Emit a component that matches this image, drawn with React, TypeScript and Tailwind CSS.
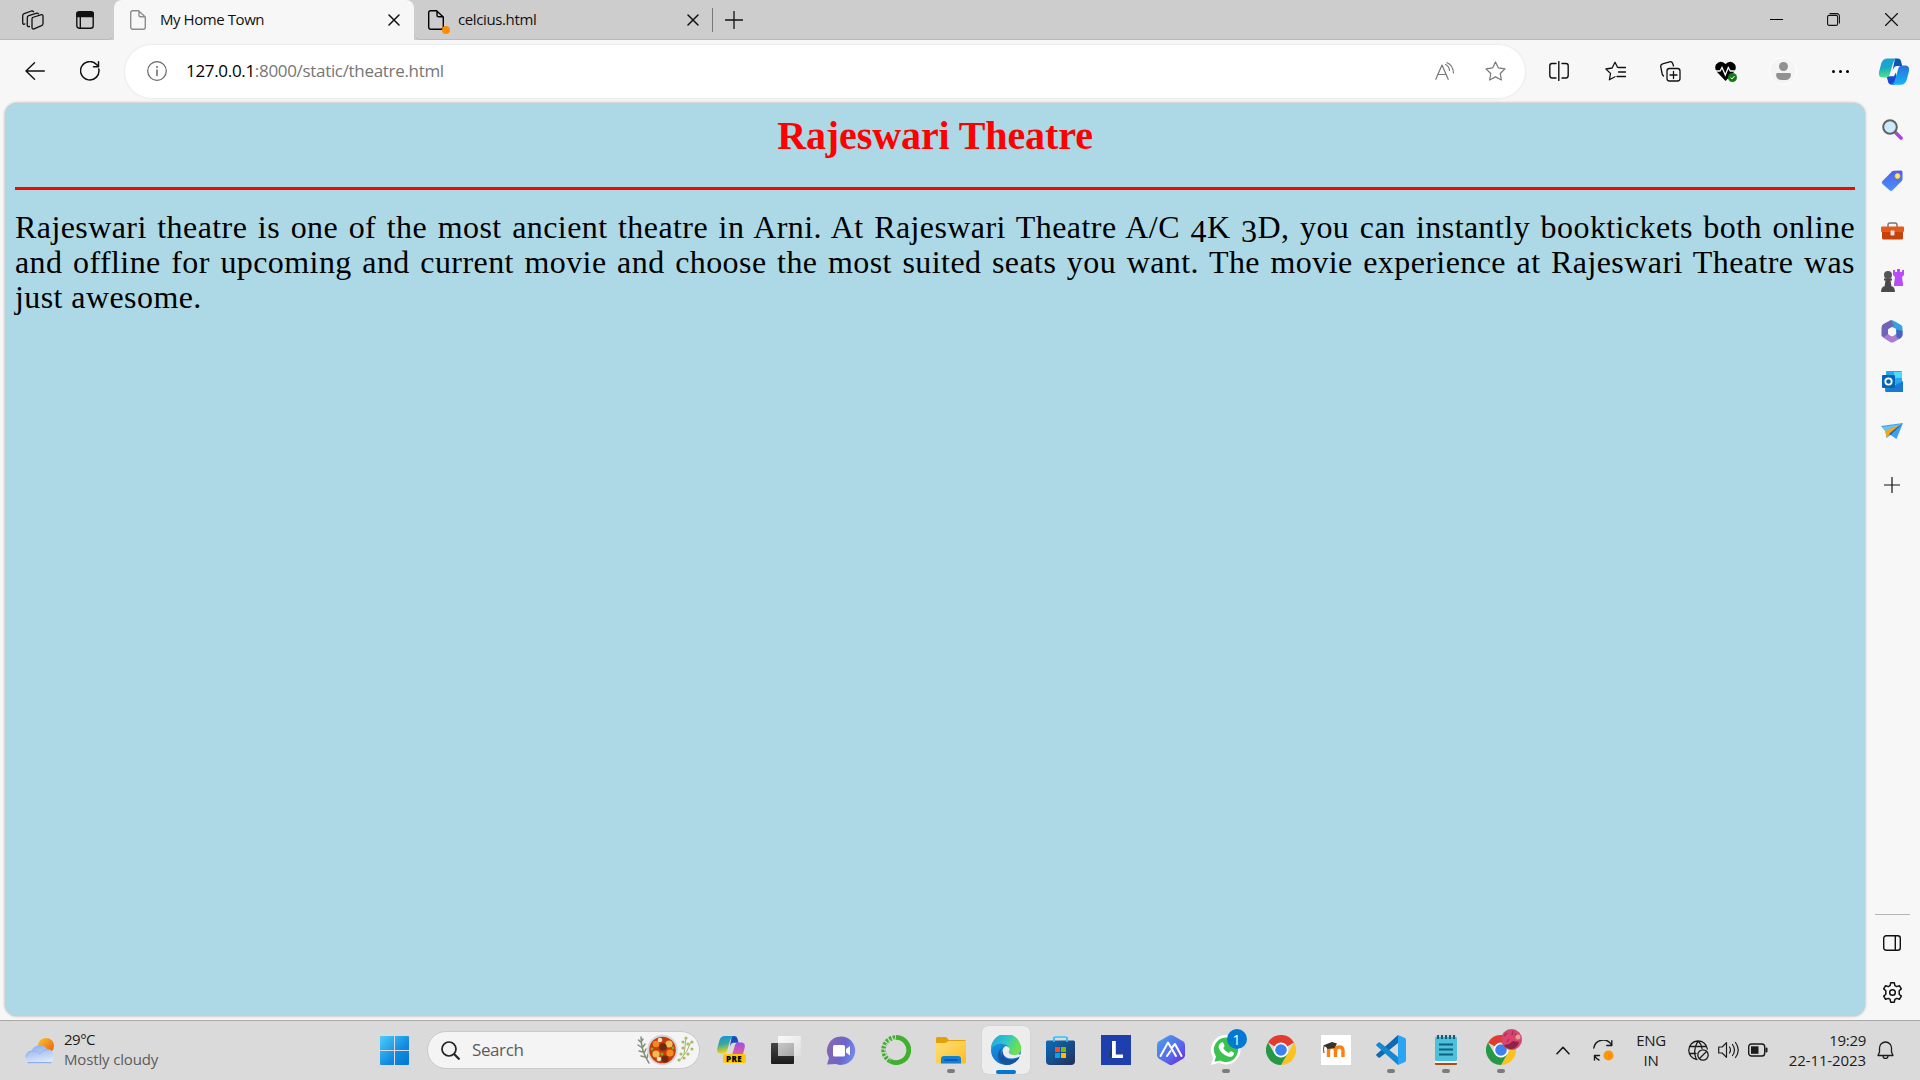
import React, { ReactNode } from "react";

const line = { fill: "none", stroke: "currentColor", strokeLinecap: "round" as const, strokeLinejoin: "round" as const };

function Cell({ className, children }: { className: string; children?: ReactNode }) {
  return <div className={`flex shrink-0 items-center justify-center ${className}`}>{children}</div>;
}

function DocIcon({ className }: { className: string }) {
  return (
    <svg width="16" height="20" viewBox="0 0 16 20" className={className} {...line} strokeWidth="1.4">
      <path d="M2.5.7h6L15.3 7v10.3a2 2 0 0 1-2 2H2.7a2 2 0 0 1-2-2V2.5A1.8 1.8 0 0 1 2.5.7zM9 1v4.2A1.6 1.6 0 0 0 10.600 6.800H15" />
    </svg>
  );
}

function CloseIcon() {
  return (
    <svg width="12" height="12" viewBox="0 0 12 12" {...line} strokeWidth="1.5">
      <path d="M1 1l10 10M11 1L1 11" />
    </svg>
  );
}

function TabStrip() {
  return (
    <div className="flex h-10 bg-[#cdcdcd] text-[15px] text-[#111]">
      <div className="flex w-[114px] items-center rounded-br-md border-b border-[#b9b9b9] pl-[6px]">
        <Cell className="w-[53px]">
          <svg width="22" height="20" viewBox="0 0 22 20" {...line} strokeWidth="1.3">
            <path d="M10.500 7.500l9-2.800q1.500-.2 1.500 1.300v7.500q0 1.500-1.500 2.200l-7.500 3.200q-2 .5-2-1.300V9.300q0-1.300 .5-1.800z" />
            <path d="M7.500 16.500q-2.200.5-2.200-1.300V7.500q0-1.300 1.500-1.900l8-2.500q1.200-.3 1.700.8" />
            <path d="M3 14q-2.300.8-2.300-1.200V5.800q0-1.500 1.500-2.100L9.500 1q1.500-.3 2 .8" />
          </svg>
        </Cell>
        <Cell className="w-[52px]">
          <svg width="18" height="18" viewBox="0 0 18 18" {...line} strokeWidth="1.400">
            <rect x=".8" y=".8" width="16.400" height="16.400" rx="2.500" />
            <path d="M1 1.500h16v4H1z" fill="currentColor" />
            <path d="M4.300 5v12" />
          </svg>
        </Cell>
      </div>
      <div className="flex w-[300px] items-center rounded-t-lg bg-[#f7f7f7] pr-[14px] pl-4">
        <DocIcon className="text-[#8c8c8c]" />
        <span className="ml-[14px] grow pb-[2px] font-['Open_Sans'] tracking-[-0.43px]">My Home Town</span>
        <CloseIcon />
      </div>
      <div className="flex w-[298px] items-center rounded-bl-md border-b border-[#b9b9b9] pr-[13px] pl-[14px]">
        <div className="relative">
          <DocIcon className="text-black" />
          <span className="absolute top-4 left-[14px] h-2 w-2 rounded-full bg-[#ff8c00]" />
        </div>
        <span className="ml-[14px] grow font-['Open_Sans'] tracking-[-0.38px]">celcius.html</span>
        <CloseIcon />
      </div>
      <div className="flex grow items-center border-b border-[#b9b9b9]">
        <div className="h-6 w-px bg-[#777]" />
        <Cell className="w-[42px]">
          <svg width="18" height="18" viewBox="0 0 18 18" {...line} strokeWidth="1.300">
            <path d="M9 .5v17M.5 9h17" />
          </svg>
        </Cell>
        <div className="grow" />
        <Cell className="w-[57px]">
          <div className="h-px w-[13px] bg-black" />
        </Cell>
        <Cell className="w-[57px]">
          <svg width="13" height="13" viewBox="0 0 13 13" {...line} strokeWidth="1.100">
            <rect x=".6" y="2.400" width="10" height="10" rx="1.500" />
            <path d="M3 .6h7a2.400 2.400 0 0 1 2.400 2.400v7" />
          </svg>
        </Cell>
        <Cell className="w-[58px]">
          <svg width="13" height="13" viewBox="0 0 13 13" {...line} strokeWidth="1.200">
            <path d="M.5.5l12 12M12.500.5l-12 12" />
          </svg>
        </Cell>
      </div>
    </div>
  );
}

function CopilotIcon() {
  return (
    <svg width="30" height="27" viewBox="0 0 32 28">
      <defs>
        <linearGradient id="cpA" x1="0" y1="0" x2="0.100" y2="1">
          <stop offset="0" stopColor="#1a9fe0" />
          <stop offset=".5" stopColor="#17a9c4" />
          <stop offset="1" stopColor="#4fe08a" />
        </linearGradient>
        <linearGradient id="cpB" x1="0" y1="0" x2="0" y2="1">
          <stop offset="0" stopColor="#2a6fdc" />
          <stop offset="1" stopColor="#14b4fa" />
        </linearGradient>
      </defs>
      <path d="M17 0h3q3 0 3.500 3l1.300 5H19q-3 0-4.500 5z" fill="#0b57b0" />
      <path d="M8 19h8l2-4 1 10-2 3h-3q-4 0-4.500-4z" fill="#1a49d4" />
      <path d="M9 0h10q-3 1-4 5l-3.500 12q-1 3.500-4 3.500H4q-5 0-4-6L2.500 5Q4 0 9 0z" fill="url(#cpA)" />
      <path d="M23 28H12.500q3.500-1 4.500-5l3.500-12Q21.500 7.500 25 7.500h3q5 0 4 6L29.500 23Q28 28 23 28z" fill="url(#cpB)" />
    </svg>
  );
}

function Toolbar() {
  return (
    <div className="flex h-[63px] items-center bg-[#f7f7f7] pl-[7px] text-[#111]">
      <Cell className="w-14 pb-[2px]">
        <svg width="20" height="18" viewBox="0 0 20 18" {...line} strokeWidth="1.400">
          <path d="M19.300 9H1M9.500.8L1 9l8.500 8.200" />
        </svg>
      </Cell>
      <Cell className="w-[54px] pb-px">
        <svg width="20" height="20" viewBox="0 0 20 20" {...line} strokeWidth="1.500">
          <path d="M18.800 8A9.200 9.200 0 1 1 16.500 3.500L18.500 5.500M18.500.8v5h-5" />
        </svg>
      </Cell>
      <div className="ml-2 flex h-[53px] w-[1400px] items-center rounded-full bg-white pr-[5px] pb-px pl-3 shadow-[0_0_3px_rgba(0,0,0,0.1)]">
        <Cell className="w-10">
          <svg width="20" height="20" viewBox="0 0 20 20" {...line} strokeWidth="1.200" className="text-[#666]">
            <circle cx="10" cy="10" r="9.300" />
            <path d="M10 9v5.500" strokeWidth="1.500" />
            <circle cx="10" cy="6" r=".4" fill="currentColor" />
          </svg>
        </Cell>
        <span className="ml-[9px] grow font-['Open_Sans'] text-[17px] tracking-[-0.32px] text-[#767676]">
          <span className="text-black">127.0.0.1</span>:8000/static/theatre.html
        </span>
        <Cell className="w-[50px] text-[#777]">
          <svg width="20" height="18" viewBox="0 0 20 18" {...line} strokeWidth="1.200">
            <path d="M.8 17.300L7 3l6.200 14.300M3 12.500h8M10.500 2.500q3.500 1.500 4 6M12 .7q6 2.300 6.500 10.300" />
          </svg>
        </Cell>
        <Cell className="w-[50px] text-[#777]">
          <svg width="21" height="20" viewBox="0 0 21 20" {...line} strokeWidth="1.200">
            <path d="M10.500 1l2.900 5.900 6.600 1-4.800 4.600 1.200 6.500-5.900-3.100L4.600 19l1.200-6.500L1 7.900l6.600-1z" />
          </svg>
        </Cell>
      </div>
      <div className="ml-[6px] flex grow pb-px">
        <Cell className="w-14">
          <svg width="20" height="20" viewBox="0 0 20 20" {...line} strokeWidth="1.400">
            <path d="M7 2.500H3q-2.200 0-2.200 2.200v9.600Q.8 17 3 17h4M13 2.500h4q2.200 0 2.200 2.200v9.600Q19.200 17 17 17h-4M9.800.5v19" />
          </svg>
        </Cell>
        <Cell className="w-14">
          <svg width="21" height="20" viewBox="0 0 21 20" {...line} strokeWidth="1.300">
            <path d="M20.500 6.500H14l-1.500-.2-2.500-5-2.900 5.700-6.200 1 4.600 4.400-1.100 6.400 5.600-3M13.500 11h7M12 15.500h8.500" />
          </svg>
        </Cell>
        <Cell className="w-[55px]">
          <svg width="21" height="21" viewBox="0 0 21 21" {...line} strokeWidth="1.300">
            <rect x="7" y="7.500" width="13" height="12.500" rx="2.500" />
            <path d="M13.500 10.500v7M10 14h7M3.500 15Q2.500 14 2.200 13L.8 6Q.3 3.500 2.600 2.800l7-2q2.400-.5 3.200 1.900l.7 2.300" />
          </svg>
        </Cell>
        <Cell className="w-[56px]">
          <svg width="22" height="21" viewBox="0 0 22 21">
            <path d="M10.500 20L2 11Q-1 7 1 3.500 5-1.500 10.500 3q5.500-4.500 9.500.5 2 3.500-1 7.500z" fill="#000" />
            <path d="M0 10h5l2-3.500 3.300 7.500 3-7.500 2 3.500h6" fill="none" stroke="#f7f7f7" strokeWidth="1.300" />
            <circle cx="17.500" cy="16.500" r="4.500" fill="#107c10" />
            <path d="M15.500 16.500l1.500 1.500 2.500-3" fill="none" stroke="#fff" strokeWidth="1" />
          </svg>
        </Cell>
        <Cell className="w-[58px]">
          <div className="flex h-7 w-7 flex-col items-center justify-center gap-[2px] rounded-full border border-white bg-[#f4f4f4]">
            <div className="h-[9px] w-[9px] rounded-full bg-[#919191]" />
            <div className="h-[7px] w-[15px] rounded-t-[2px] rounded-b-[7px] bg-[#919191]" />
          </div>
        </Cell>
        <Cell className="w-14 gap-1">
          <div className="h-[3px] w-[3px] rounded-full bg-black" />
          <div className="h-[3px] w-[3px] rounded-full bg-black" />
          <div className="h-[3px] w-[3px] rounded-full bg-black" />
        </Cell>
        <Cell className="w-[51px]">
          <CopilotIcon />
        </Cell>
      </div>
    </div>
  );
}

function Page() {
  return (
    <main className="ml-[5px] h-[913px] w-[1860px] shrink-0 rounded-xl bg-[#add8e6] px-[10px] shadow-[0_0_3px_rgba(0,0,0,0.35)]">
      <h1 className="pt-[9px] text-center font-['Liberation_Serif'] text-[40px] leading-[48px] font-bold tracking-[-0.1px] text-[#ff0000]">
        Rajeswari Theatre
      </h1>
      <hr className="mt-[27px] h-[3px] border-0 bg-[#ff0000]" />
      <div className="mt-[20px] font-['Liberation_Serif'] text-[32px] leading-[35px] tracking-[0.42px] whitespace-nowrap text-black">
        <p className="[text-align-last:justify]">
          Rajeswari theatre is one of the most ancient theatre in Arni. At Rajeswari Theatre A/C{" "}
          <span className="relative top-[4px]">4</span>K <span className="relative top-[4px]">3</span>D, you can instantly booktickets both online
        </p>
        <p className="[text-align-last:justify]">
          and offline for upcoming and current movie and choose the most suited seats you want. The movie experience at Rajeswari Theatre was
        </p>
        <p>just awesome.</p>
      </div>
    </main>
  );
}

function Sidebar() {
  return (
    <aside className="flex grow flex-col items-center pt-px pr-px text-[#111]">
      <Cell className="h-[51px]">
        <svg width="21" height="21" viewBox="0 0 21 21">
          <path d="M14 14l5 5" stroke="#b43cf0" strokeWidth="3.600" strokeLinecap="round" />
          <path d="M12 12l3 3" stroke="#777" strokeWidth="2" />
          <circle cx="8" cy="8" r="6.800" fill="#cdeafd" stroke="#606266" strokeWidth="2" />
        </svg>
      </Cell>
      <Cell className="h-[51px]">
        <svg width="22" height="22" viewBox="0 0 22 22">
          <defs>
            <linearGradient id="tag" x1="0" y1="0" x2="0" y2="1">
              <stop offset="0" stopColor="#4f5fe0" />
              <stop offset="1" stopColor="#4a90ff" />
            </linearGradient>
          </defs>
          <path d="M11 1.500q.8-.7 2-.8l7-.2q1.500 0 1.500 1.500v7q0 1.300-1 2.300l-9 9q-1.500 1.300-3 0L1.500 14q-1.500-1.500 0-3z" fill="url(#tag)" />
          <circle cx="16.500" cy="6" r="2.500" fill="#ffe680" stroke="#f6c515" />
        </svg>
      </Cell>
      <Cell className="h-[50px]">
        <svg width="23" height="18" viewBox="0 0 23 18">
          <path d="M7 5V3q0-2 2-2h5q2 0 2 2v2" fill="none" stroke="#777" strokeWidth="1.500" />
          <rect x="1" y="5" width="21" height="12.500" rx="1.500" fill="#c8410b" />
          <rect x="0" y="4.500" width="23" height="5.500" rx="1" fill="#e25a1c" />
          <rect x="9.500" y="8.500" width="4" height="5" rx="1" fill="#e3e3e3" />
        </svg>
      </Cell>
      <Cell className="h-[50px]">
        <svg width="24" height="24" viewBox="0 0 24 24">
          <path d="M13 1h2v2h2V0h3v3h2V1h2v5l-2 2 1 7v2h-9V15l1-7-2-2z" fill="#b84df5" />
          <circle cx="8" cy="6" r="4" fill="#555" />
          <path d="M4 9.500h8v2h-1.500l1 6h1.500q2 2 2 5.500H1q0-3.500 2-5.500h1.500l1-6H4z" fill="#4a4a4a" />
        </svg>
      </Cell>
      <Cell className="h-[50px]">
        <svg width="22" height="23" viewBox="0 0 22 23">
          <path d="M10 0q2 0 4 1.500l6 3.500q1.500 1 1.500 3v4L13 8 8 7z" fill="#35a4dc" />
          <path d="M10 0L2.500 4Q.5 5 .5 8v8l3 2 4-3V9.500l5.500-4z" fill="#7064b5" />
          <path d="M21.500 11v4q0 2-2 3.200L13 22q-2 1-4 0l-7-4.500 5-3 4.500 2 4-3z" fill="#a97bd3" />
          <path d="M15 9l6.500 2v4q-.5 2.500-3 4l-3-2z" fill="#3f68c5" />
          <path d="M11 7l4 2.300v4.500L11 16l-4-2.200V9.300z" fill="#f7f7f7" />
        </svg>
      </Cell>
      <Cell className="h-[50px]">
        <svg width="21" height="21" viewBox="0 0 21 21">
          <rect x="4" y="0" width="16" height="13" rx="1" fill="#28a8ea" />
          <path d="M12 1h8v6h-8z" fill="#50d9ff" />
          <path d="M3 10l9 4 9-4v10H3z" fill="#1490df" />
          <path d="M3 20l18-9v10H4z" fill="#1b78cf" />
          <rect x="0" y="4" width="13" height="13" rx="1" fill="#0364b8" />
          <circle cx="6.500" cy="10.500" r="3.200" fill="none" stroke="#fff" strokeWidth="1.800" />
        </svg>
      </Cell>
      <Cell className="h-[50px]">
        <svg width="22" height="17" viewBox="0 0 22 17">
          <path d="M0 3l22-3-6.500 16-6-4-4 3-1-7z" fill="#3ba1ee" />
          <path d="M4 8L21 1 9.500 12z" fill="#1565c0" />
          <path d="M1 4L21 1 5 9.500z" fill="#64c4f8" />
          <path d="M4 8L20 1 9 10l-3 5z" fill="#f5a612" />
        </svg>
      </Cell>
      <Cell className="h-[58px]">
        <svg width="16" height="16" viewBox="0 0 16 16" {...line} strokeWidth="1.200">
          <path d="M8 .5v15M.5 8h15" />
        </svg>
      </Cell>
      <div className="grow" />
      <div className="h-px w-[35px] bg-[#b5b5b5]" />
      <Cell className="h-[55px]">
        <svg width="18" height="16" viewBox="0 0 18 16" {...line} strokeWidth="1.400">
          <rect x=".7" y=".7" width="16.600" height="14.600" rx="2.500" />
          <path d="M12.300 1v14" />
        </svg>
      </Cell>
      <Cell className="mb-[5px] h-[45px]">
        <svg width="21" height="21" viewBox="0 0 21 21" {...line} strokeWidth="1.500">
          <circle cx="10.500" cy="10.500" r="2.800" />
          <path d="M8.700.8h3.600l.6 2.800 1.800 1 2.700-.9 1.900 3.200-2.100 1.900v3.400l2.100 1.900-1.900 3.200-2.700-.9-1.800 1-.6 2.800H8.700l-.6-2.800-1.800-1-2.700.9-1.900-3.200 2.100-1.900V8.800L1.700 6.900l1.900-3.200 2.700.9 1.800-1z" />
        </svg>
      </Cell>
    </aside>
  );
}

function ChromeIcon() {
  return (
    <svg width="30" height="30" viewBox="0 0 30 30">
      <path d="M15 15L2 7.500A15 15 0 0 1 28 7.500z" fill="#e33b2e" />
      <path d="M15 7.500h13L21.500 19 15 30A15 15 0 0 0 28 7.500z" fill="#fcc31e" />
      <path d="M2 7.500A15 15 0 0 0 15 30l6.500-11.300L15 22.500l-6.500-3.700z" fill="#279847" />
      <circle cx="15" cy="15" r="7.400" fill="#fff" />
      <circle cx="15" cy="15" r="5.800" fill="#3b82f0" />
    </svg>
  );
}

function Slot({ children, running }: { children: ReactNode; running?: boolean }) {
  return (
    <div className="relative flex h-full w-[55px] shrink-0 items-center justify-center">
      {children}
      {running && <span className="absolute bottom-[6px] left-[24px] h-1 w-2 rounded-full bg-[#7c7c7c]" />}
    </div>
  );
}

function TaskIcons() {
  return (
    <div className="flex h-full">
      <Slot>
        <div className="relative h-7 w-7">
          <svg width="28" height="24" viewBox="0 0 32 28">
            <defs>
              <linearGradient id="preA" x1="0" y1="0" x2="0.200" y2="1">
                <stop offset="0" stopColor="#178fe0" />
                <stop offset=".5" stopColor="#36a89f" />
                <stop offset="1" stopColor="#f2d01c" />
              </linearGradient>
              <linearGradient id="preB" x1="0" y1="0" x2="0" y2="1">
                <stop offset="0" stopColor="#a04bea" />
                <stop offset="1" stopColor="#ff6d6d" />
              </linearGradient>
            </defs>
            <path d="M17 0h3q3 0 3.500 3l1.300 5H19q-3 0-4.500 5z" fill="#164dbb" />
            <path d="M9 0h10q-3 1-4 5l-3.500 12q-1 3.500-4 3.500H4q-5 0-4-6L2.500 5Q4 0 9 0z" fill="url(#preA)" />
            <path d="M23 28H12.500q3.500-1 4.500-5l3.500-12Q21.500 7.500 25 7.500h3q5 0 4 6L29.500 23Q28 28 23 28z" fill="url(#preB)" />
          </svg>
          <span className="absolute top-[18px] left-[6px] h-[9px] w-[23px] rounded-[2px] bg-[#fdc70c] text-center font-['Open_Sans'] text-[8px] leading-[9px] font-extrabold tracking-[0.4px] text-black">
            PRE
          </span>
        </div>
      </Slot>
      <Slot>
        <svg width="30" height="28" viewBox="0 0 30 28">
          <defs>
            <linearGradient id="tv" x1="0" y1="0" x2="0" y2="1">
              <stop offset="0" stopColor="#454743" />
              <stop offset="1" stopColor="#1c1c1c" />
            </linearGradient>
            <linearGradient id="tw" x1="0" y1="0" x2="1" y2="1">
              <stop offset="0" stopColor="#fafafa" />
              <stop offset="1" stopColor="#dedede" />
            </linearGradient>
            <linearGradient id="tx" x1="0" y1="0" x2="1" y2="1">
              <stop offset="0" stopColor="#c8c8c8" />
              <stop offset="1" stopColor="#a6a6a6" />
            </linearGradient>
          </defs>
          <rect x="0" y="7" width="23" height="21" rx="1" fill="url(#tv)" />
          <rect x="7" y="0" width="23" height="20" rx="1" fill="url(#tw)" />
          <rect x="7" y="7" width="16" height="13" fill="url(#tx)" />
        </svg>
      </Slot>
      <Slot>
        <svg width="30" height="29" viewBox="0 0 30 29">
          <defs>
            <linearGradient id="chat" x1="0" y1="0.200" x2="1" y2="0.500">
              <stop offset="0" stopColor="#8a66ae" />
              <stop offset=".6" stopColor="#6a66cc" />
              <stop offset="1" stopColor="#7488ea" />
            </linearGradient>
          </defs>
          <path d="M15 .5A14.200 14.200 0 1 1 10 28L1 28.500 3 22A14.200 14.200 0 0 1 15 .5z" fill="url(#chat)" />
          <rect x="7" y="9" width="12" height="11.500" rx="1.500" fill="#fff" />
          <path d="M20 13l4-3v9.500l-4-3z" fill="#fff" />
        </svg>
      </Slot>
      <Slot>
        <svg width="30" height="30" viewBox="0 0 30 30">
          <path d="M15 2.400A12.600 12.600 0 1 1 9 26" fill="none" stroke="#41b02e" strokeWidth="4.800" />
          <path d="M9 26A12.600 12.600 0 0 1 15 2.400" fill="none" stroke="#41b02e" strokeWidth="4.600" strokeDasharray="2.500 1.200" />
          <path d="M9.500 24.500A11 11 0 0 1 14 4" fill="none" stroke="#dadada" strokeWidth="1" strokeDasharray="3 2" />
        </svg>
      </Slot>
      <Slot running>
        <svg width="30" height="27" viewBox="0 0 30 27">
          <defs>
            <linearGradient id="fold" x1="0" y1="0" x2="1" y2="1">
              <stop offset="0" stopColor="#ffe07a" />
              <stop offset="1" stopColor="#fbbd20" />
            </linearGradient>
          </defs>
          <path d="M0 1.500Q0 0 1.500 0H10l3 3h15.500Q30 3 30 5v6H0z" fill="#e3a008" />
          <path d="M0 6h9.500l3-2H30v21q0 1.500-1.500 1.500h-27Q0 26.500 0 25z" fill="url(#fold)" />
          <path d="M5 26.500V22q0-3 3-3h14q3 0 3 3v4.500z" fill="#1481d5" />
          <path d="M9 23h12" stroke="#0b519c" strokeWidth="1.600" strokeLinecap="round" />
        </svg>
      </Slot>
      <Slot>
        <div className="relative flex h-12 w-12 items-center justify-center rounded-md bg-[#ededed] shadow-[0_0_1px_rgba(0,0,0,0.2)]">
          <svg width="30" height="30" viewBox="0 0 30 30">
            <defs>
              <linearGradient id="edA" x1="0" y1="0" x2="1" y2="0.400">
                <stop offset="0" stopColor="#269fd9" />
                <stop offset=".5" stopColor="#2cc3d2" />
                <stop offset="1" stopColor="#6ee24b" />
              </linearGradient>
              <linearGradient id="edB" x1="0" y1="0" x2="0.300" y2="1">
                <stop offset="0" stopColor="#1aa0e0" />
                <stop offset="1" stopColor="#0f6fd0" />
              </linearGradient>
            </defs>
            <circle cx="15" cy="15" r="15" fill="url(#edB)" />
            <path d="M0 13.500A15 15 0 0 1 30 14q0 6-7 6-6 0-5-3 1-6-4-7.500Q6 7 0 13.500z" fill="url(#edA)" />
            <path d="M11 13q-3 5 0 10 4 6 11 3.500 3-.8 5.700-3A15 15 0 0 1 15 30Q7 28 7 20q0-4 4-7z" fill="#15569f" />
            <path d="M14.500 11q-4.500 3-2.500 7.500 2.500 5.500 9.500 5 5-.6 7-2 2.500-1-1-2.500-4 1.500-7.500.5-3.500-1.300-1.500-4 .5-4-4-4.500z" fill="#ededed" />
            <path d="M12 15q-1.500 9 7 9.800 5 .2 9.500-2.800l-1 2Q21 30 14 27q-6-4-2-12z" fill="#17529a" />
          </svg>
          <span className="absolute bottom-0 left-[14px] h-1 w-5 rounded-full bg-[#0078d4]" />
        </div>
      </Slot>
      <Slot>
        <svg width="29" height="29" viewBox="0 0 29 29">
          <defs>
            <linearGradient id="store" x1="0" y1="0" x2="1" y2="1">
              <stop offset="0" stopColor="#0a6cbd" />
              <stop offset="1" stopColor="#233058" />
            </linearGradient>
          </defs>
          <path d="M8 6V2.500Q8 1 9.500 1h10Q21 1 21 2.500V6" fill="none" stroke="#37c1f5" strokeWidth="1.600" />
          <path d="M0 6Q0 4.500 1.500 4.500h26Q29 4.500 29 6v19q0 4-4 4H4q-4 0-4-4z" fill="url(#store)" />
          <path d="M8 1v5M21 1v5" stroke="#37c1f5" strokeWidth="1.600" />
          <rect x="9" y="11" width="5" height="5" fill="#f25022" />
          <rect x="15" y="11" width="5" height="5" fill="#7fba00" />
          <rect x="9" y="17" width="5" height="5" fill="#00a4ef" />
          <rect x="15" y="17" width="5" height="5" fill="#ffb900" />
        </svg>
      </Slot>
      <Slot>
        <svg width="30" height="30" viewBox="0 0 30 30">
          <rect width="30" height="30" fill="#1f3fae" />
          <path d="M11 7l-3 16 3-2z" fill="#12405e" />
          <path d="M11 6h3.800v13.500H22V23H11z" fill="#fff" />
        </svg>
      </Slot>
      <Slot>
        <svg width="28" height="30" viewBox="0 0 28 30">
          <defs>
            <linearGradient id="arc" x1="0" y1="0" x2="1" y2="1">
              <stop offset="0" stopColor="#45a5ee" />
              <stop offset=".6" stopColor="#5a66ea" />
              <stop offset="1" stopColor="#6b1fe0" />
            </linearGradient>
          </defs>
          <path d="M12 .6q2-1 4 0l10 5.600q2 1.200 2 3.500v10.600q0 2.300-2 3.500l-10 5.600q-2 1-4 0L2 23.800q-2-1.200-2-3.500V9.700q0-2.300 2-3.500z" fill="url(#arc)" />
          <path d="M3.500 21L11 7.500l8 13.500M10 21l3.500-5M15.500 12L18 9l6.500 12" fill="none" stroke="#fff" strokeWidth="2" strokeLinecap="round" strokeLinejoin="round" />
        </svg>
      </Slot>
      <Slot running>
        <div className="relative h-[30px] w-[30px]">
          <svg width="30" height="30" viewBox="0 0 30 30">
            <path d="M15 0a14.700 14.700 0 1 1-7 27.700L0 30l2.300-7.500A14.700 14.700 0 0 1 15 0z" fill="#fff" />
            <path d="M15 2.500a12.200 12.200 0 1 1-6 22.900L3.500 26.700 5 21.500A12.200 12.200 0 0 1 15 2.500z" fill="#3ac24f" />
            <path d="M10.500 7.500q1.500-.5 2 .8l1 2.400q.2.800-1.300 2.300 2 3.700 5.500 5 1.700-2.200 2.500-1.800l2.800 1.500q.5 1.800-1.500 3.500-2 1.200-5 0-6-2.200-8.500-7.500-1.500-3.700 2.500-6.200z" fill="#fff" />
          </svg>
          <span className="absolute -top-[6px] left-[16px] flex h-5 w-5 items-center justify-center rounded-full bg-[#0078d4] font-['Open_Sans'] text-[14px] text-white">
            1
          </span>
        </div>
      </Slot>
      <Slot>
        <ChromeIcon />
      </Slot>
      <Slot>
        <div className="flex h-[30px] w-[30px] items-end justify-center bg-white">
          <svg width="30" height="30" viewBox="0 0 30 30">
            <path d="M7.500 22v-6.500q0-3.500 3.500-3.500t3.500 3.500V22M14.500 15.500q0-3.500 3.700-3.500t3.800 3.500V22" fill="none" stroke="#f98012" strokeWidth="3.400" />
            <path d="M2 10.500l9-3.500 5 1.500-2.500 4.500-7 1-1.500-2z" fill="#333" />
            <path d="M3 11q-1 3 0 7" fill="none" stroke="#444" strokeWidth="1" />
          </svg>
        </div>
      </Slot>
      <Slot running>
        <svg width="30" height="30" viewBox="0 0 30 30">
          <path d="M22 0l7 3q1 .6 1 2v20q0 1.400-1 2l-7 3z" fill="#2aa5f4" />
          <path d="M22 0v8L4 22.500q-.8.500-1.500 0l-2-1.800q-.8-.8 0-1.500z" fill="#0f6ab2" />
          <path d="M22 30v-8L4 7.500q-.8-.5-1.500 0l-2 1.800q-.8.800 0 1.500z" fill="#1688cf" />
        </svg>
      </Slot>
      <Slot running>
        <svg width="22" height="30" viewBox="0 0 22 30">
          <rect x="0" y="24" width="22" height="6" rx="1" fill="#ad4b12" />
          <rect x="0" y="24" width="22" height="4" fill="#f2f2f2" />
          <rect x="0" y="2" width="22" height="24" rx="1" fill="#4fc0dc" />
          <path d="M3 0v4M7 0v4M11 0v4M15 0v4M19 0v4" stroke="#0f5f7d" strokeWidth="2.200" />
          <path d="M4 9.500h14M4 14.500h14M4 19.500h14" stroke="#10617e" strokeWidth="1.800" />
        </svg>
      </Slot>
      <Slot running>
        <div className="relative">
          <ChromeIcon />
          <svg width="21" height="21" viewBox="0 0 21 21" className="absolute -top-[6px] left-[15px]">
            <circle cx="10.500" cy="10.500" r="10.200" fill="#dd4370" stroke="#a35368" strokeWidth=".6" />
            <path d="M3 7l3-3M12 2l-1 4M8 10l-2 3M14 5l2 2" stroke="#9b315b" strokeWidth="1.300" />
            <path d="M3 16l5-1 4-3 6 1q-2 6.500-7.500 7Q5 20 3 16z" fill="#8d2346" />
            <circle cx="17" cy="8" r="2.500" fill="#e7a08b" />
          </svg>
        </div>
      </Slot>
    </div>
  );
}

function Taskbar() {
  return (
    <footer className="flex h-[60px] items-center border-t border-[#a9a9a7] bg-[#dadada] font-['Open_Sans'] text-[#1b1b1b]">
      <div className="flex w-[380px] items-center pl-[25px]">
        <svg width="30" height="26" viewBox="0 0 30 26">
          <defs>
            <linearGradient id="sun" x1="0" y1="0" x2="1" y2="1">
              <stop offset="0" stopColor="#f7c52b" />
              <stop offset="1" stopColor="#ea5b0c" />
            </linearGradient>
            <linearGradient id="cloud" x1="0" y1="0" x2="0.300" y2="1">
              <stop offset="0" stopColor="#86a9ee" />
              <stop offset="1" stopColor="#dbe7fb" />
            </linearGradient>
          </defs>
          <circle cx="21" cy="8" r="8" fill="url(#sun)" />
          <path d="M7 25.500a6.500 6.500 0 0 1-.5-13A9 9 0 0 1 22 11a7.300 7.300 0 0 1 1 14.500z" fill="url(#cloud)" />
          <path d="M1 19q2-6 8-6 4 0 6 3 3-5 9-4" fill="none" stroke="#84a3e4" strokeWidth=".8" opacity=".7" />
          <path d="M3 24.600h23" stroke="#8eabf0" strokeWidth="1.400" strokeLinecap="round" />
        </svg>
        <div className="ml-[9px] pb-[4px] text-[15px] leading-5">
          <div className="tracking-[-0.5px]">29°C</div>
          <div className="tracking-[-0.15px] text-[#5c5c5c]">Mostly cloudy</div>
        </div>
      </div>
      <svg width="29" height="29" viewBox="0 0 29 29">
        <defs>
          <linearGradient id="win" gradientUnits="userSpaceOnUse" x1="0" y1="0" x2="29" y2="29">
            <stop offset="0" stopColor="#4ccdfb" />
            <stop offset=".6" stopColor="#128ae0" />
            <stop offset="1" stopColor="#0078d4" />
          </linearGradient>
        </defs>
        <path d="M1 0h13v14H0V1q0-1 1-1zM15 0h13q1 0 1 1v13H15zM0 15h14v14H1q-1 0-1-1zM15 15h14v13q0 1-1 1H15z" fill="url(#win)" />
      </svg>
      <div className="mb-px ml-[18px] flex h-[38px] w-[273px] items-center rounded-full border border-[#c9c9c9] bg-[#f4f4f4] pr-[5px] pl-[13px]">
        <svg width="19" height="19" viewBox="0 0 19 19" fill="none" stroke="#222" strokeLinecap="round">
          <circle cx="8" cy="8" r="7" strokeWidth="1.700" />
          <path d="M13.300 13.300l4.500 4.500" strokeWidth="2.200" />
        </svg>
        <span className="ml-3 grow text-[17px] tracking-[-0.4px] text-[#5c5c5c]">Search</span>
        <svg width="58" height="32" viewBox="0 0 58 32">
          <path d="M5 3q0 14 8 26M4.500 8L2.500 6M5 13l-3-2M7 18l-4-1M9 23l-4-1M5 8l2-3M6 14l3-4M8 19l2-4M11 24l1-4" stroke="#849078" strokeWidth="1.500" fill="none" strokeLinecap="round" />
          <path d="M55 8q-3 10-12 19M50 3l-2 18" stroke="#a9b46c" strokeWidth="1" fill="none" />
          <g fill="#a9b965">
            <circle cx="50" cy="4" r="1.600" /><circle cx="47" cy="8" r="1.600" /><circle cx="52" cy="10" r="1.600" />
            <circle cx="56" cy="8" r="1.600" /><circle cx="47" cy="14" r="1.600" /><circle cx="56" cy="15" r="1.600" />
            <circle cx="45" cy="20" r="1.600" /><circle cx="52" cy="20" r="1.600" /><circle cx="43" cy="26" r="1.600" /><circle cx="48" cy="24" r="1.600" />
          </g>
          <circle cx="26.500" cy="16" r="15.300" fill="#d6d5d8" />
          <circle cx="26.500" cy="16" r="13.300" fill="#c63d0b" />
          <circle cx="20" cy="10" r="3.300" fill="#f48a1e" />
          <circle cx="33" cy="10" r="3.600" fill="#f4bd58" />
          <circle cx="34" cy="19" r="3.600" fill="#fb8b1c" />
          <circle cx="20" cy="20" r="3.600" fill="#f3bc52" />
          <circle cx="27" cy="13" r="3.800" fill="#6e2a14" />
          <circle cx="29" cy="25" r="3.500" fill="#6e2a14" />
          <circle cx="24" cy="6" r="2.300" fill="#f1ded0" />
          <circle cx="23" cy="25" r="2.300" fill="#f1ded0" />
          <circle cx="26" cy="20" r="1.500" fill="#7fae22" />
          <circle cx="16" cy="15" r="1.500" fill="#7fae22" />
          <circle cx="37" cy="14" r="1.400" fill="#7fae22" />
        </svg>
      </div>
      <div className="ml-[3px] h-full pb-px">
        <TaskIcons />
      </div>
      <div className="flex grow items-center pb-px pl-[15px]">
        <Cell className="w-10">
          <svg width="14" height="9" viewBox="0 0 14 9" {...line} strokeWidth="1.600">
            <path d="M1 7.700L7 1.300l6 6.400" />
          </svg>
        </Cell>
        <Cell className="w-10">
          <svg width="21" height="21" viewBox="0 0 21 21" {...line} strokeWidth="1.400">
            <path d="M.8 8A9.500 9.500 0 0 1 18.500 5M18.800.8V5.500h-5M6.500 15.500H1.500v4.500M1.500 15.500q1.500 3 4.500 4.500" />
            <circle cx="15.500" cy="15.500" r="5" fill="#ff9500" stroke="none" />
          </svg>
        </Cell>
        <div className="w-[56px] pb-px text-center text-[15px] leading-5 tracking-[-0.3px]">
          <div>ENG</div>
          <div>IN</div>
        </div>
        <Cell className="ml-1 w-[30px]">
          <svg width="21" height="21" viewBox="0 0 21 21" {...line} strokeWidth="1.300">
            <path d="M9 19.500A9.300 9.300 0 1 1 19.300 9M1.500 6.500h17M1.500 13.500H8M8 18.500Q4.500 10 10 .8q3.500 3.500 4 7.500" />
            <circle cx="15" cy="15" r="5.200" />
            <path d="M11.500 18.500l7-7" />
          </svg>
        </Cell>
        <Cell className="w-[30px]">
          <svg width="21" height="18" viewBox="0 0 21 18" {...line} strokeWidth="1.200">
            <path d="M.7 6h3.500l4.300-4.300v14.600L4.200 12H.7zM11.500 6q2 3 0 6M14.500 3.500q4 5.500 0 11M17.500 1.500q5.500 7.500 0 15" />
          </svg>
        </Cell>
        <Cell className="w-[30px]">
          <svg width="20" height="14" viewBox="0 0 20 14" {...line} strokeWidth="1.400">
            <rect x=".7" y="1" width="16" height="12" rx="2.800" />
            <rect x="3" y="3.300" width="7.500" height="7.500" fill="currentColor" stroke="none" />
            <path d="M18.500 5.500v3" strokeWidth="2" />
          </svg>
        </Cell>
        <div className="w-[93px] pb-px text-right text-[15px] leading-5">
          <div className="tracking-[-0.3px]">19:29</div>
          <div className="tracking-[-0.1px]">22-11-2023</div>
        </div>
        <Cell className="w-[38px]">
          <svg width="17" height="18" viewBox="0 0 17 18" {...line} strokeWidth="1.300">
            <path d="M1 14.500l1.500-3.500V7a6 6 0 0 1 12 0v4l1.500 3.500zM6 15a2.500 2.500 0 0 0 5 0" />
          </svg>
        </Cell>
      </div>
    </footer>
  );
}

export default function App() {
  return (
    <div className="flex h-[1080px] w-[1920px] flex-col overflow-hidden bg-[#f7f7f7]">
      <TabStrip />
      <Toolbar />
      <div className="flex h-[917px]">
        <Page />
        <Sidebar />
      </div>
      <Taskbar />
    </div>
  );
}
